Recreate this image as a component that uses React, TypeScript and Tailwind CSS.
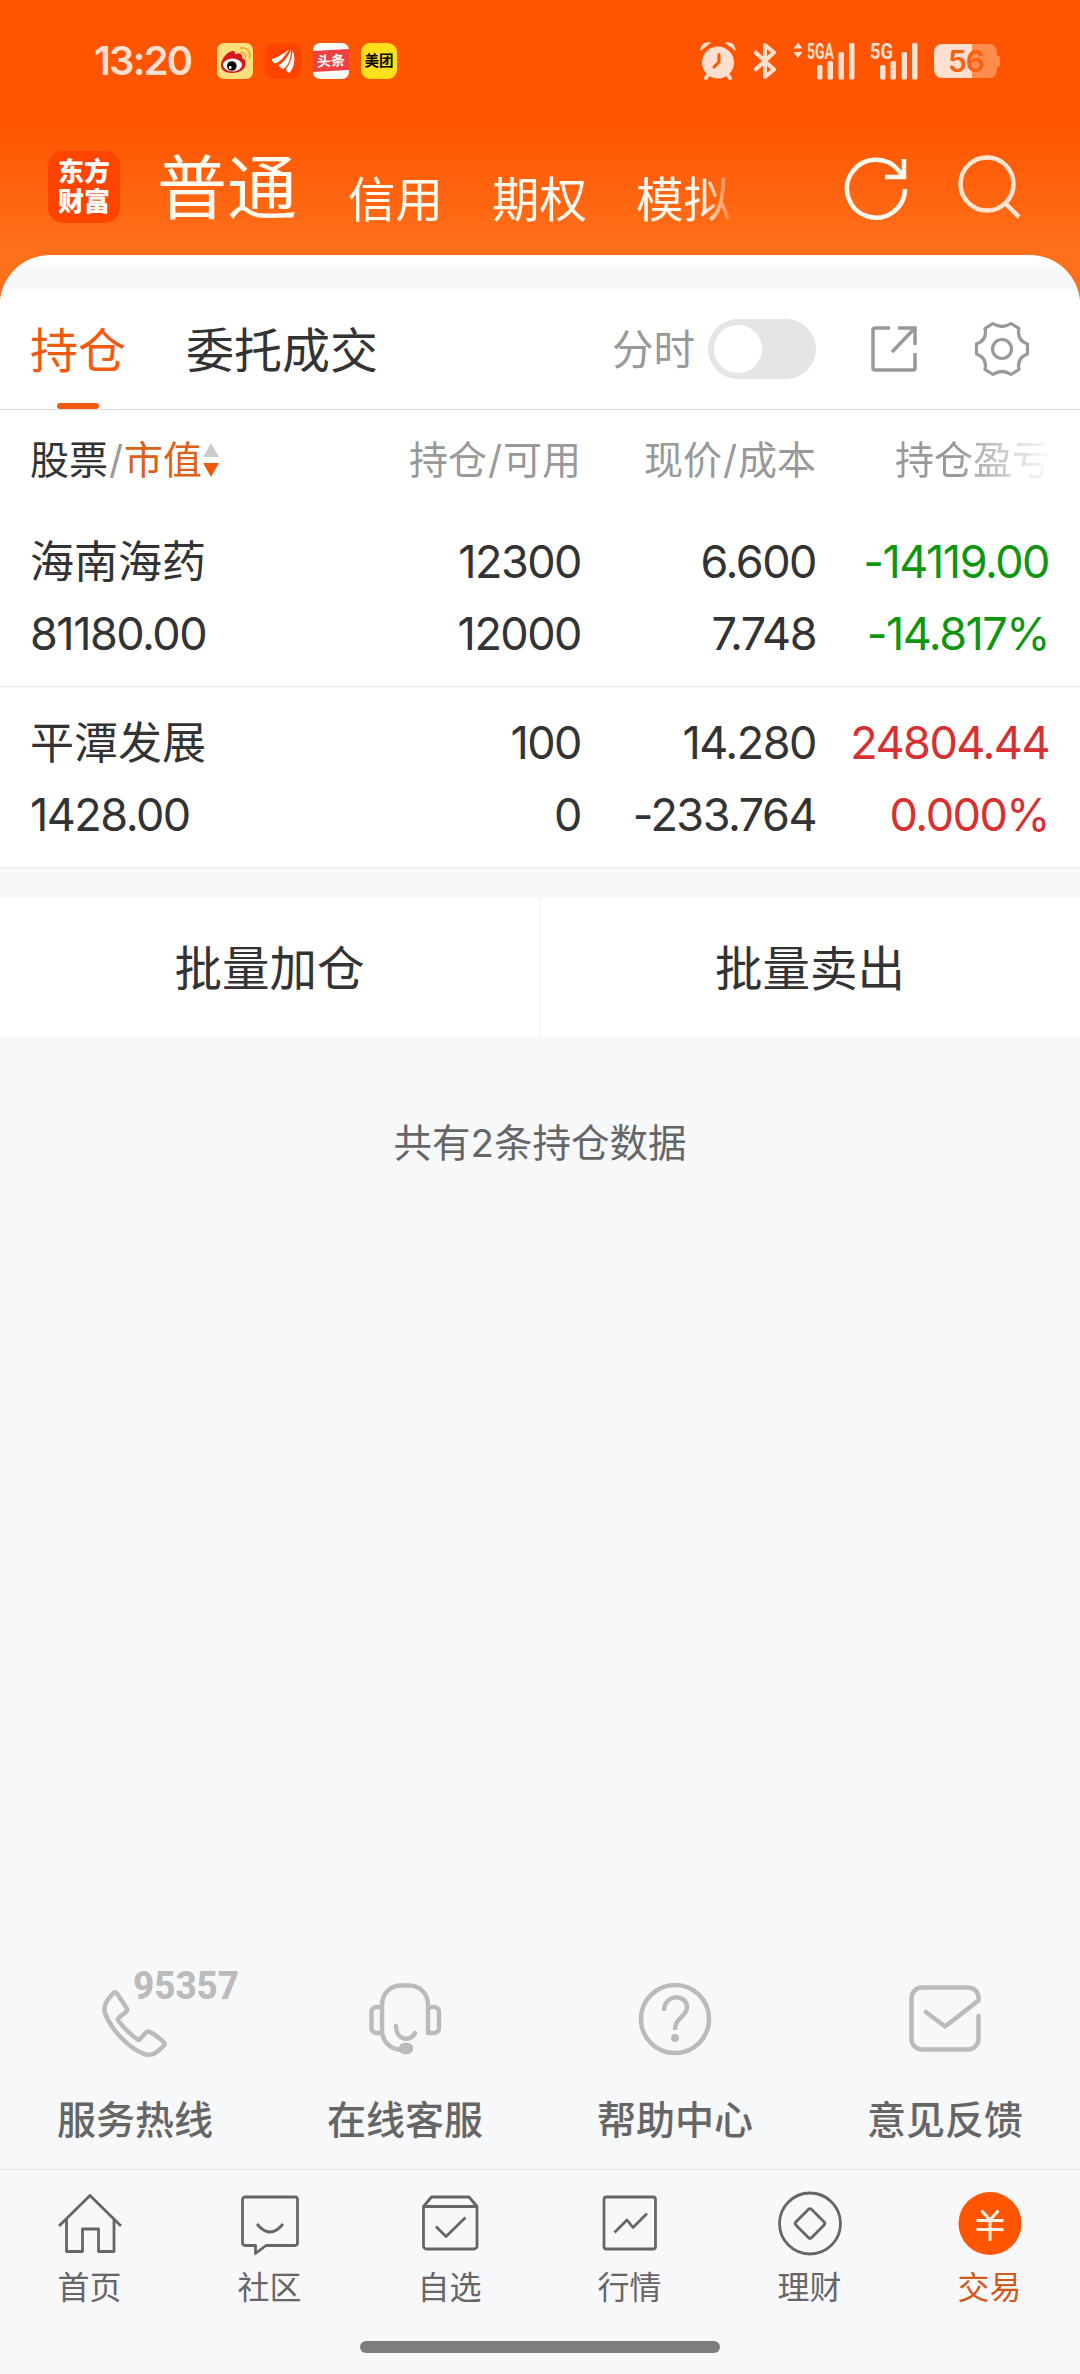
import type { ReactNode } from "react";

const tabs = ["信用", "期权", "模拟"];

const holdings = [
  {
    name: "海南海药",
    value: "81180.00",
    total: "12300",
    usable: "12000",
    price: "6.600",
    cost: "7.748",
    profit: "-14119.00",
    rate: "-14.817%",
    color: "text-[#0f960f]",
  },
  {
    name: "平潭发展",
    value: "1428.00",
    total: "100",
    usable: "0",
    price: "14.280",
    cost: "-233.764",
    profit: "24804.44",
    rate: "0.000%",
    color: "text-[#d63031]",
  },
];

const Signal = ({ label, width, arrows }: { label: string; width: number; arrows?: boolean }) => {
  // bars sit at the right end, the label over the short ones
  const w = arrows ? 62 : 48;
  return (
    <svg className="overflow-visible" width={w} height="40" viewBox={`0 0 ${w} 40`} fill="#ffdfcf">
      {arrows && <path d="M5 1.5 9.500 7.500H.5zM5 17 .5 11h9z" />}
      <text x={arrows ? 14 : 0} y="17.5" fontSize="22" fontWeight="700" fontFamily="Roboto, sans-serif" textLength={width} lengthAdjust="spacingAndGlyphs">{label}</text>
      <rect x={w - 38} y="24" width="5.5" height="14.5" rx="1.5" />
      <rect x={w - 27.5} y="20" width="5.5" height="18.5" rx="1.5" />
      <rect x={w - 16.5} y="11" width="5.5" height="27.5" rx="1.5" />
      <rect x={w - 6} y="2" width="5.5" height="36.5" rx="1.5" />
    </svg>
  );
};

const StatusBar = () => {
  return (
    <div className="h-[122px] flex items-center justify-between pl-[94px] pr-[79px] pb-px">
      {/* left */}
      <div className="flex items-center gap-3">
        <span className="w-[111px] text-[40px] leading-none font-semibold tracking-[-1.800px] text-[#ffdfcf]">13:20</span>
        {/* weibo */}
        <svg width="36" height="36" viewBox="0 0 36 36">
          <rect width="36" height="36" rx="7" fill="#ffdf7c" />
          <path d="M4 22C4 16 10 9 15 8c3-.5 3 2 3 3.500 4-2 8-1 7 3.500 3 1 4 3 3.500 6C28 27 22 30 15 30S4 27 4 22z" fill="#d8161c" />
          <ellipse cx="15.500" cy="22" rx="9.500" ry="6.500" fill="#fff" />
          <circle cx="14.800" cy="23" r="4.800" fill="#000" />
          <circle cx="13.200" cy="24.500" r="1.400" fill="#fff" />
          <path d="M24 9.500c3-.5 5 2 4.300 5M24 5c6-1 10 4 8.500 10" fill="none" stroke="#f5a83a" strokeWidth="1.800" strokeLinecap="round" />
        </svg>
        {/* eastmoney */}
        <svg width="36" height="36" viewBox="0 0 36 36">
          <rect width="36" height="36" rx="8" fill="#ff4400" />
          <path d="M7 16C12 15 17 11 24 7 20 12 17 18 10 20.500 8 20 7 18 7 16zM14 22C19 19 23 13 26 7 26 15 24 22 18.500 26 16 25.500 14.500 24 14 22zM21 26C25 21 27.500 14 27.500 7.500 31 15 29.500 24 24.500 30 22.500 29 21 28 21 26z" fill="#fff" />
        </svg>
        {/* toutiao */}
        <div className="size-9 rounded-[7px] bg-white flex items-center overflow-hidden">
          <div className="w-full h-[21px] -skew-y-3 bg-[#f04142] text-white text-[14px] leading-[21px] font-bold text-center">头条</div>
        </div>
        {/* meituan */}
        <div className="size-9 rounded-[9px] bg-[#ffe01b] text-black text-[14.500px] leading-9 font-bold text-center">美团</div>
      </div>
      {/* right */}
      <div className="flex items-center">
        <svg className="mr-4" width="38" height="40" viewBox="0 0 38 40">
          <path d="M9 34 7 37M29 34l2 3" fill="none" stroke="#ffdfcf" strokeWidth="4" strokeLinecap="round" />
          <path d="M1.500 10C1 4 6 0 12 1.800zM36.500 10C37 4 32 0 26 1.800z" fill="#ffdfcf" />
          <circle cx="19" cy="21.500" r="16" fill="#ffdfcf" />
          <path d="M20 13.500v7.500l-5 5" fill="none" stroke="#ff5500" strokeWidth="3" strokeLinecap="round" />
        </svg>
        <svg className="mr-4" width="24" height="40" viewBox="0 0 24 40" fill="none" stroke="#ffdfcf" strokeWidth="4" strokeLinejoin="round">
          <path d="M1.500 10.500 21 28.500 12 36V4l9 7.500L1.500 29.500" />
        </svg>
        <Signal label="5GA" width={27} arrows />
        <div className="w-[15px]" />
        <Signal label="5G" width={23} />
        <svg className="ml-4" width="67" height="40" viewBox="0 0 67 40">
          <path d="M38 3h17a8 8 0 0 1 8 8v18a8 8 0 0 1-8 8H38z" fill="#ff8b4d" />
          <path d="M38 3H8a8 8 0 0 0-8 8v18a8 8 0 0 0 8 8h30z" fill="#ffdfcf" />
          <path d="M63 15h1a2 2 0 0 1 2 2v7a2 2 0 0 1-2 2h-1z" fill="#ff8b4d" />
          <text x="14" y="31" fontSize="30" fontWeight="600" fontFamily="Inter, sans-serif" fill="#f9610f" textLength="37">56</text>
        </svg>
      </div>
    </div>
  );
};

const Header = () => {
  return (
    <div className="h-[316px] shrink-0 bg-linear-to-b from-[#ff5500] from-40% to-[#ff701a] to-80%">
      <StatusBar />
      <div className="h-[130px] flex items-center pl-12">
        <div className="size-[72px] shrink-0 rounded-[15px] bg-[#ff4400] text-white text-[26px] leading-[30px] font-black text-center pt-[6px]">
          东方<br />财富
        </div>
        {/* the last tab fades out at the edge of the strip */}
        <div className="flex items-end shrink-0 ml-[37px] w-[580px] h-[120px] whitespace-nowrap mask-r-from-[94%] mask-r-to-100% text-[#fffaf0]">
          <span className="text-[70px] leading-[116px] mr-[51px]">普通</span>
          {tabs.map((tab) => (
            <span key={tab} className="text-[47.500px] leading-[94px] mr-[49px]">{tab}</span>
          ))}
        </div>
        <svg className="ml-[107px] mt-0.5 shrink-0" width="66" height="66" viewBox="0 0 66 66" fill="none" stroke="#fffaf0" strokeWidth="4.500">
          <path d="M61 34a29 29 0 1 1-6-18L60 22" />
          <path d="M41 22h19V4" />
        </svg>
        <svg className="ml-[48px] mt-0.5 shrink-0" width="64" height="66" viewBox="0 0 64 66" fill="none" stroke="#ffe6d2" strokeWidth="4.500">
          <circle cx="29" cy="29" r="26.500" />
          <path d="M47 48 61 62" />
        </svg>
      </div>
    </div>
  );
};

const Toolbar = () => {
  return (
    <div className="h-[121px] flex items-center border-b border-[#dfdfe0] pl-[30px] pr-[50px] bg-white">
      <div className="relative h-full flex items-center pt-[3px] text-[48px] text-[#f2590d]">
        持仓
        <span className="absolute bottom-0 left-[27px] w-[42px] h-[6px] rounded-full bg-[#f2590d]" />
      </div>
      <span className="ml-[60px] pt-[3px] text-[48px] text-[#333]">委托成交</span>
      <span className="ml-auto pt-[3px] text-[41.500px] text-[#999]">分时</span>
      <div className="ml-[13px] w-[108px] h-[60px] rounded-full bg-[#e5e5e7] p-[6px]">
        <div className="size-12 rounded-full bg-white" />
      </div>
      <svg className="ml-[54px]" width="48" height="48" viewBox="0 0 48 48" fill="none" stroke="#999" strokeWidth="3.500">
        <path d="M20 3H5a2 2 0 0 0-2 2v38a2 2 0 0 0 2 2h38a2 2 0 0 0 2-2V28" />
        <path d="M28 3h17v17M45 3 22 27" />
      </svg>
      <svg className="ml-[56px]" width="56" height="56" viewBox="0 0 56 56" fill="none" stroke="#999" strokeWidth="3.200" strokeLinejoin="round">
        <path d="M19 2.500Q28 8.500 37 2.500L45 7.500Q42.500 19 53.500 23V33Q42.500 37 45 48.500L37 53.500Q28 47.500 19 53.500L11 48.500Q13.500 37 2.500 33V23Q13.500 19 11 7.500Z" />
        <circle cx="28" cy="28" r="9.500" />
      </svg>
    </div>
  );
};

const Row = ({ item }: { item: (typeof holdings)[number] }) => {
  return (
    <div className="h-[181px] grid grid-cols-[300px_251px_235px_233px] content-center pl-[30px] pt-[3px] border-b border-[#ebebec] text-[45px] leading-[72px] tracking-[-1.500px] text-right text-[#333]">
      <span className="text-left text-[44px] tracking-normal">{item.name}</span>
      <span>{item.total}</span>
      <span>{item.price}</span>
      <span className={item.color}>{item.profit}</span>
      <span className="text-left">{item.value}</span>
      <span>{item.usable}</span>
      <span>{item.cost}</span>
      <span className={item.color}>{item.rate}</span>
    </div>
  );
};

const Holdings = () => {
  return (
    <div className="bg-white">
      <div className="h-[96px] grid grid-cols-[300px_251px_235px_235px] pl-[30px] text-[39px] leading-[99px] text-right text-[#999]">
        <div className="flex items-center text-[#333]">
          股票<span className="mx-px text-[#999]">/</span><span className="text-[#dc6016]">市值</span>
          <svg width="18" height="36" viewBox="0 0 18 36">
            <path d="M9 1 17 15H1z" fill="#ccc" />
            <path d="M9 35 1 21h16z" fill="#f2590d" />
          </svg>
        </div>
        <span>持仓<span className="mx-px">/</span>可用</span>
        <span>现价<span className="mx-px">/</span>成本</span>
        <span className="mask-r-from-60% mask-r-to-100%">持仓盈亏</span>
      </div>
      {holdings.map((item) => (
        <Row key={item.name} item={item} />
      ))}
    </div>
  );
};

const Service = ({ label, children }: { label: string; children: ReactNode }) => {
  return (
    <div className="flex flex-col items-center">
      <svg className="overflow-visible" width="76" height="76" viewBox="0 0 76 76" fill="none" stroke="#bbb" strokeWidth="4.500" strokeLinecap="round" strokeLinejoin="round">
        {children}
      </svg>
      <span className="mt-[35px] text-[39px] leading-[56px] font-medium text-[#666]">{label}</span>
    </div>
  );
};

const Services = () => {
  return (
    <div className="h-[188px] grid grid-cols-4">
      <Service label="服务热线">
        <path d="M20 12.500Q18 10.500 16 12.500C10 19 6 24 8 32 14 48 30 66 46 72.500 56 77 62 69 67 64.500 68.500 62.500 67 61 65.500 60 61 56 57 53 53 51 51 50 50 50.500 48.500 52L43 58C42 59 41 59 40 58Q29 50 21.500 40C20.500 38.500 21 37.500 22 36.500L29 31C30.500 29.500 30.500 28.500 29.500 27Z" />
        <text x="36" y="17.500" fontSize="38" fontWeight="800" fontFamily="Roboto, sans-serif" textLength="106" lengthAdjust="spacingAndGlyphs" fill="#bbb" stroke="none">95357</text>
      </Service>
      <Service label="在线客服">
        <path d="M15 52V24C15 12 24 4.500 34 4.500h8C52 4.500 61 12 61 24V52h6a5 5 0 0 0 5-5V31a5 5 0 0 0-5-5H61M15 26H9.500a5 5 0 0 0-5 5V47a5 5 0 0 0 5 5H15C17 62 24 68 34 69" />
        <path d="M29 45C29 60 44 61 48 52" />
        <rect x="34" y="64" width="10" height="7" rx="3.500" fill="#bbb" />
      </Service>
      <Service label="帮助中心">
        <circle cx="38" cy="38" r="34" />
        <path d="M27 30C27 12 50 13 50 26 50 36 38 36 38 49" strokeLinecap="butt" />
        <circle cx="38" cy="57" r="4" fill="#bbb" stroke="none" />
      </Service>
      <Service label="意见反馈">
        <path d="M19 31 38 45.500 71.500 19.500C72.500 11 67 6.500 61 6.500H15A10.500 10.500 0 0 0 4.500 17V58A10.500 10.500 0 0 0 15 68.500H61A10.500 10.500 0 0 0 71.500 58V35" />
      </Service>
    </div>
  );
};

const NavItem = ({ label, active, children }: { label: string; active?: boolean; children: ReactNode }) => {
  return (
    <div className="flex flex-col items-center pt-[21px] pr-px">
      <svg width="66" height="66" viewBox="0 0 66 66" fill="none" stroke="#666" strokeWidth="2.800" strokeLinejoin="round">
        {children}
      </svg>
      <span className={`mt-[9px] text-[32px] leading-[44px] ${active ? "text-[#cf5a1c]" : "text-[#666]"}`}>{label}</span>
    </div>
  );
};

const BottomNav = () => {
  return (
    <div className="h-[205px] border-t border-[#e1e1e4] bg-[#f8f8fb] flex flex-col">
      <div className="grid grid-cols-6">
        <NavItem label="首页">
          <path d="M2 35 33 4.500 64 35M9.500 28V60.500H25.500V38H41.500V60.500H57V28" />
        </NavItem>
        <NavItem label="社区">
          <path d="M8 6H58a2.500 2.500 0 0 1 2.500 2.500V52a2.500 2.500 0 0 1-2.500 2.500H29L18.500 62.500V54.500H8A2.500 2.500 0 0 1 5.500 52V8.500A2.500 2.500 0 0 1 8 6Z" />
          <path d="M20 33Q33 49 46 33" />
        </NavItem>
        <NavItem label="自选">
          <path d="M6.500 15.500V55a3 3 0 0 0 3 3H57a3 3 0 0 0 3-3V15.500ZM6.500 15.500 14.500 6H52L60 15.500M19 35.500 29 45.500 48.500 26.500" />
        </NavItem>
        <NavItem label="行情">
          <rect x="7" y="6" width="51.500" height="52" rx="2.500" />
          <path d="M17.500 41.500 30 29 36 36.500 50 22.500" />
        </NavItem>
        <NavItem label="理财">
          <circle cx="33" cy="32.500" r="30.500" />
          <rect x="22" y="21.500" width="22" height="22" rx="2" transform="rotate(45 33 32.500)" />
        </NavItem>
        <NavItem label="交易" active>
          <circle cx="33" cy="32.500" r="31.500" fill="#ff5500" stroke="none" />
          <path d="M24.500 19.500 33 29 41.500 19.500M19.500 29.500H46.500M19.500 38.500H46.500M33 29V50" stroke="#fff4e6" strokeWidth="3" />
        </NavItem>
      </div>
      <div className="mt-[31px] mx-auto w-[360px] h-3 rounded-full bg-[#7d7d7d]" />
    </div>
  );
};

const App = () => {
  return (
    <div className="w-[1080px] h-[2374px] flex flex-col overflow-hidden bg-[#f7f8fa] font-[Inter,'Noto_Sans_CJK_SC',sans-serif]">
      <Header />
      {/* sheet over the header */}
      <div className="relative -mt-[61px] rounded-t-[50px] overflow-hidden bg-white">
        <div className="mt-[10px] h-6 bg-[#f7f8fa]" />
        <Toolbar />
        <Holdings />
      </div>
      <div className="mt-[30px] h-[138px] grid grid-cols-2 bg-white text-[47.500px] leading-[141px] text-center text-[#333]">
        <span className="border-r border-[#f3f3f5]">批量加仓</span>
        <span>批量卖出</span>
      </div>
      <p className="mt-[79px] text-[38.500px] leading-[56px] text-center text-[#666]">共有2条持仓数据</p>
      <div className="mt-auto">
        <Services />
        <BottomNav />
      </div>
    </div>
  );
};

export default App;
